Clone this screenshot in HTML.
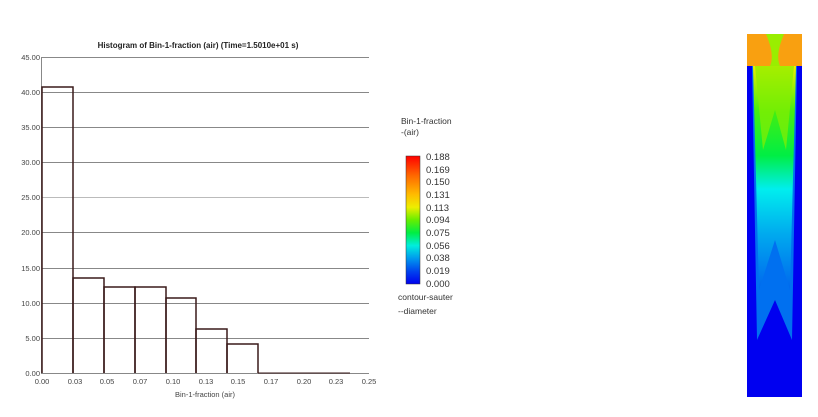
<!DOCTYPE html><html><head><style>body{margin:0;background:#fff;width:818px;height:412px;overflow:hidden}</style></head><body>
<svg width="818" height="412" xmlns="http://www.w3.org/2000/svg" font-family="Liberation Sans, sans-serif">
<text x="198" y="48" font-size="8" font-weight="bold" text-anchor="middle" fill="#222">Histogram of Bin-1-fraction (air) (Time=1.5010e+01 s)</text>
<g stroke="#888" stroke-width="1">
<line x1="42" y1="57.5" x2="369" y2="57.5"/><line x1="42" y1="92.5" x2="369" y2="92.5"/><line x1="42" y1="127.5" x2="369" y2="127.5"/><line x1="42" y1="162.5" x2="369" y2="162.5"/><line x1="42" y1="197.5" x2="369" y2="197.5" stroke="#bbb"/><line x1="42" y1="232.5" x2="369" y2="232.5"/><line x1="42" y1="268.5" x2="369" y2="268.5"/><line x1="42" y1="303.5" x2="369" y2="303.5"/><line x1="42" y1="338.5" x2="369" y2="338.5"/><line x1="42" y1="373.5" x2="369" y2="373.5"/>
<line x1="41.5" y1="57" x2="41.5" y2="374"/>
</g>
<g fill="none" stroke="#3a1a1a" stroke-width="1.5">
<path d="M42 373V87H73V373"/><path d="M73 373V278H104V373"/><path d="M104 373V287H135V373"/><path d="M135 373V287H166V373"/><path d="M166 373V298H196V373"/><path d="M196 373V329H227V373"/><path d="M227 373V344H258V373"/><path d="M258 373H350" stroke-width="1"/>
</g>
<g font-size="7.5" fill="#444" text-anchor="end">
<text x="40" y="60">45.00</text><text x="40" y="95">40.00</text><text x="40" y="130">35.00</text><text x="40" y="165">30.00</text><text x="40" y="200">25.00</text><text x="40" y="235">20.00</text><text x="40" y="271">15.00</text><text x="40" y="306">10.00</text><text x="40" y="341">5.00</text><text x="40" y="376">0.00</text>
</g>
<g font-size="7.5" fill="#444" text-anchor="middle">
<text x="42" y="384">0.00</text><text x="75" y="384">0.03</text><text x="107" y="384">0.05</text><text x="140" y="384">0.07</text><text x="173" y="384">0.10</text><text x="206" y="384">0.13</text><text x="238" y="384">0.15</text><text x="271" y="384">0.17</text><text x="304" y="384">0.20</text><text x="336" y="384">0.23</text><text x="369" y="384">0.25</text>
<text x="205" y="397">Bin-1-fraction (air)</text>
</g>
<defs><linearGradient id="cb" x1="0" y1="0" x2="0" y2="1">
<stop offset="0" stop-color="#f00"/><stop offset=".15" stop-color="#f60"/><stop offset=".3" stop-color="#fb0"/><stop offset=".4" stop-color="#ee0"/><stop offset=".5" stop-color="#6e0"/><stop offset=".6" stop-color="#0e4"/><stop offset=".7" stop-color="#0ed"/><stop offset=".8" stop-color="#09e"/><stop offset=".9" stop-color="#04e"/><stop offset="1" stop-color="#00e"/></linearGradient>
<linearGradient id="cv" x1="0" y1="0" x2="0" y2="1"><stop offset="0" stop-color="#ee0"/><stop offset=".2" stop-color="#4e1"/><stop offset=".4" stop-color="#0e4"/><stop offset=".55" stop-color="#0ee"/><stop offset=".75" stop-color="#0ae"/><stop offset="1" stop-color="#06e"/></linearGradient></defs>
<rect x="406" y="156" width="14" height="128" fill="url(#cb)" stroke="#333" stroke-width=".5"/>
<g font-size="9.5" fill="#333">
<text x="426" y="160">0.188</text><text x="426" y="173">0.169</text><text x="426" y="185">0.150</text><text x="426" y="198">0.131</text><text x="426" y="211">0.113</text><text x="426" y="223">0.094</text><text x="426" y="236">0.075</text><text x="426" y="249">0.056</text><text x="426" y="261">0.038</text><text x="426" y="274">0.019</text><text x="426" y="287">0.000</text>
</g>
<g font-size="8.5" fill="#333"><text x="401" y="124">Bin-1-fraction</text><text x="401" y="135">-(air)</text><text x="398" y="300">contour-sauter</text><text x="398" y="314">--diameter</text></g>
<rect x="747" y="34" width="55" height="363" fill="#0000f0"/>
<path d="M752 66 L797 66 L792 340 L775 300 L757 340 Z" fill="#0070f0"/>
<path d="M753 66 L796 66 L790 290 L775 240 L759 290 Z" fill="url(#cv)"/>
<path d="M755 66 L794 66 L786 150 L775 110 L763 150 Z" fill="#8e0" opacity=".7"/>
<rect x="747" y="34" width="55" height="32" fill="#f9a010"/>
<path d="M766 34 Q775 55 770 66 L780 66 Q775 55 784 34 Z" fill="#9e0"/>
</svg></body></html>
